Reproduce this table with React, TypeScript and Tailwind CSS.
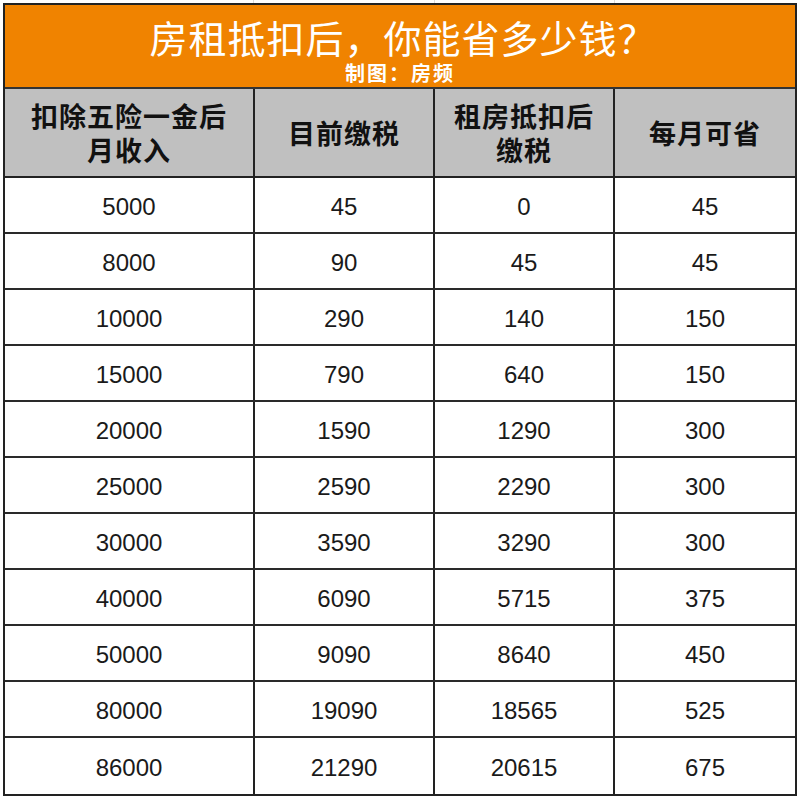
const rows: [string, string, string, string][] = [
  ["5000", "45", "0", "45"],
  ["8000", "90", "45", "45"],
  ["10000", "290", "140", "150"],
  ["15000", "790", "640", "150"],
  ["20000", "1590", "1290", "300"],
  ["25000", "2590", "2290", "300"],
  ["30000", "3590", "3290", "300"],
  ["40000", "6090", "5715", "375"],
  ["50000", "9090", "8640", "450"],
  ["80000", "19090", "18565", "525"],
  ["86000", "21290", "20615", "675"],
];

const cjk = "font-['Microsoft_YaHei','Noto_Sans_CJK_SC',sans-serif]";

export default function App() {
  return (
    <div className="w-[800px] h-[800px] bg-white overflow-hidden">
      {/* faint spreadsheet gridlines above the table */}
      <div className="h-[3px] grid grid-cols-[254px_181px_180px_185px]">
        <div className="border-r border-[#dcdcdc]" />
        <div className="border-r border-[#dcdcdc]" />
        <div className="border-r border-[#dcdcdc]" />
        <div />
      </div>

      <div className="ml-[3px] w-[794px] border-2 border-[#222]">
        <div
          className={`h-[84px] bg-[#f08300] border-b-2 border-[#333] flex flex-col items-center text-white ${cjk}`}
        >
          <div className="mt-[14px] text-[38px] leading-[36px] tracking-[1px] pl-[6px]">
            房租抵扣后，你能省多少钱？
          </div>
          <div className="mt-[8px] text-[20px] leading-[20px] tracking-[2px] font-bold">
            制图：房频
          </div>
        </div>

        <div
          className={`h-[89px] grid grid-cols-[250px_180px_180px_1fr] bg-[#c0c0c0] border-b-2 border-[#222] text-[#111] font-bold text-[27px] leading-[34px] tracking-[1px] ${cjk}`}
        >
          <div className="border-r-2 border-[#222] flex flex-col items-center justify-center">
            <span>扣除五险一金后</span>
            <span>月收入</span>
          </div>
          <div className="border-r-2 border-[#222] flex items-center justify-center">
            目前缴税
          </div>
          <div className="border-r-2 border-[#222] flex flex-col items-center justify-center">
            <span>租房抵扣后</span>
            <span>缴税</span>
          </div>
          <div className="flex items-center justify-center">每月可省</div>
        </div>

        {rows.map((r, i) => (
          <div
            key={r[0]}
            className={`h-[56px] grid grid-cols-[250px_180px_180px_1fr] text-[24px] text-[#1a1a1a] font-['Liberation_Sans',Arial,sans-serif] ${
              i < rows.length - 1 ? "border-b-2 border-[#2a2a2a]" : ""
            }`}
          >
            <div className="border-r-2 border-[#222] pt-[3px] flex items-center justify-center">{r[0]}</div>
            <div className="border-r-2 border-[#222] pt-[3px] flex items-center justify-center">{r[1]}</div>
            <div className="border-r-2 border-[#222] pt-[3px] flex items-center justify-center">{r[2]}</div>
            <div className="pt-[3px] flex items-center justify-center">{r[3]}</div>
          </div>
        ))}
      </div>
    </div>
  );
}
